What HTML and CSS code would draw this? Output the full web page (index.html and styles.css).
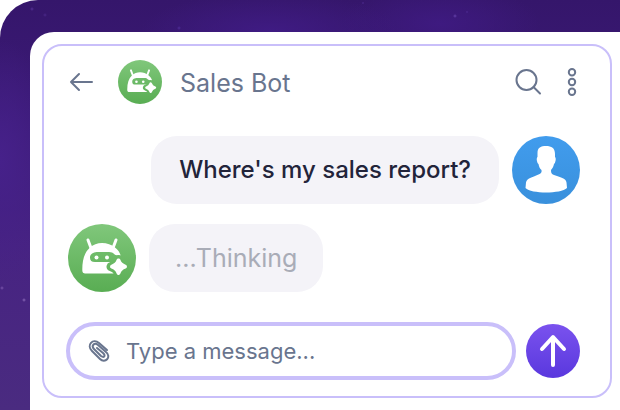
FILE: index.html
```
<!DOCTYPE html>
<html lang="en">
<head>
    <meta charset="utf-8">
    <title>Sales Bot</title>
    <link rel="stylesheet" href="styles.css">
</head>

<body>
    <!-- bot picture, used in the header and in the messages -->
    <svg class="defs" aria-hidden="true">
        <defs>
            <linearGradient id="green" x1="0" y1="0" x2="0" y2="1">
                <stop offset="0" stop-color="#80c77b"/>
                <stop offset="1" stop-color="#59ad53"/>
            </linearGradient>
            <mask id="face" maskUnits="userSpaceOnUse" x="0" y="0" width="68" height="68">
                <rect width="68" height="68" fill="#fff"/>
                <path d="M22 33.500C22 29.500 26 28 30 28H41C46 28 46 31.500 50 31.500H55V38H27C23.500 38 22 36.500 22 33.500Z" fill="#000"/>
                <path d="M50.500 35.500Q52 41 58 42.700Q52 44.400 50.500 50Q49 44.400 43 42.700Q49 41 50.500 35.500Z" fill="#000" stroke="#000" stroke-width="9" stroke-linejoin="round"/>
            </mask>
            <symbol id="bot" viewBox="0 0 68 68">
                <circle cx="34" cy="34" r="34" fill="url(#green)"/>
                <g mask="url(#face)" fill="#fff">
                    <path d="M18 49.500C15 49.500 14.300 48.500 14.300 45.500C14.300 36 16.500 28.500 21.500 24C25 20.500 29.500 19 34 19C39 19 43.500 20.500 47 23.500C50 26 51.500 28 52.500 31V49.500Z"/>
                    <path d="M20 16L23 24M48 16L45 24" stroke="#fff" stroke-width="3" stroke-linecap="round"/>
                </g>
                <circle cx="28.500" cy="33.500" r="2" fill="#fff"/>
                <circle cx="39" cy="33.500" r="2" fill="#fff"/>
                <path d="M50.500 36.500Q52 41 57 42.700Q52 44.400 50.500 49Q49 44.400 44 42.700Q49 41 50.500 36.500Z" fill="#fff" stroke="#fff" stroke-width="4" stroke-linejoin="round"/>
            </symbol>
        </defs>
    </svg>

    <div class="stage">
        <div class="panel">
            <main class="chat">
                <header class="chat_head">
                    <button type="button" class="icon_btn" aria-label="Back">
                        <svg width="28" height="28" viewBox="0 0 28 28"><path d="M24 14H3M11 6L3 14L11 22"/></svg>
                    </button>
                    <svg class="head_avatar" role="img" aria-label="Sales Bot"><use href="#bot"/></svg>
                    <h1>Sales Bot</h1>
                    <button type="button" class="icon_btn" aria-label="Search">
                        <svg width="28" height="28" viewBox="0 0 28 28"><circle cx="12.500" cy="12" r="10"/><path d="M19.500 19L26 25.500"/></svg>
                    </button>
                    <button type="button" class="icon_btn menu_btn" aria-label="Menu">
                        <svg width="12" height="30" viewBox="0 0 12 30"><circle cx="6" cy="5.300" r="3.200"/><circle cx="6" cy="15" r="3.200"/><circle cx="6" cy="24.700" r="3.200"/></svg>
                    </button>
                </header>

                <div class="messages">
                    <div class="msg msg_me">
                        <p class="bubble">Where's my sales report?</p>
                        <svg class="avatar" viewBox="0 0 68 68" role="img" aria-label="You">
                            <defs>
                                <linearGradient id="blue" x1="0" y1="0" x2="0" y2="1">
                                    <stop offset="0" stop-color="#419ced"/>
                                    <stop offset="1" stop-color="#3990dc"/>
                                </linearGradient>
                            </defs>
                            <circle cx="34" cy="34" r="34" fill="url(#blue)"/>
                            <path d="M25.500 17C25.500 11.500 29 10 34 10C39.500 10 43 12 43 18V21C44.500 22 43.500 27 42 28C41.500 31 40 33 39 34C39 37 39.500 38 42 39C48 41.500 54 42 54.500 46.500L55 52C49 58 19 58 13.500 52L14 46.500C15 42 20 41.500 26.500 38.500C29 37.500 30 36.500 29.500 34C28 33 27 31 26.500 28C25 27 24 22 25.500 21Z" fill="#fff"/>
                        </svg>
                    </div>
                    <div class="msg">
                        <svg class="avatar" role="img" aria-label="Sales Bot"><use href="#bot"/></svg>
                        <p class="bubble thinking">...Thinking</p>
                    </div>
                </div>

                <form class="composer">
                    <div class="field">
                        <button type="button" class="icon_btn" aria-label="Attach a file">
                            <svg width="24" height="24" viewBox="0 0 24 24"><path d="M20 11L12 4C6 -1 -1 6 5 12L13 20C18 25 25 18 19 13L11 6C7 3 4 7 7 10L14 17C17 19 19 17 16 14L10 9"/></svg>
                        </button>
                        <input type="text" aria-label="Message" placeholder="Type a message...">
                    </div>
                    <button type="submit" class="send" aria-label="Send">
                        <svg width="54" height="54" viewBox="0 0 54 54"><path d="M27 41V14M16 25L27 13L38 25"/></svg>
                    </button>
                </form>
            </main>
        </div>
    </div>
</body>

</html>
```
FILE: styles.css
```
* {
    box-sizing: border-box;
    margin: 0;
    padding: 0;
}
body {
    background: #fff;
    color: #22243a;
    font-family: Inter, "Liberation Sans", sans-serif;
    font-size: 25px;
    line-height: 32px;
}
button {
    border: 0;
    background: none;
    cursor: pointer;
}
svg {
    display: block;
}
.defs {
    position: absolute;
    width: 0;
    height: 0;
}
.stage {
    display: flex;
    min-height: 100vh;
    padding: 32px 0 0 30px;
    border-top-left-radius: 38px;
    /* a few stars over the night sky */
    background:
        radial-gradient(circle at 32px 9px, #553097, transparent 2px),
        radial-gradient(circle at 45px 15px, #4a2888, transparent 2px),
        radial-gradient(circle at 179px 28px, #4f2c98, transparent 2px),
        radial-gradient(circle at 363px 3px, #5a36a4, transparent 1px),
        radial-gradient(circle at 455px 16px, #6541aa, transparent 2px),
        radial-gradient(circle at 467px 12px, #5a36a4, transparent 1px),
        radial-gradient(circle at 2px 288px, #7a55ac, transparent 2px),
        radial-gradient(circle at 24px 300px, #8a68b8, transparent 2px),
        radial-gradient(ellipse 130px 40px at 270px 32px, #3f1b83, transparent),
        radial-gradient(ellipse 100px 40px at 440px 24px, #3e1a80, transparent),
        radial-gradient(ellipse 60px 120px at 0 160px, #46218a, transparent),
        linear-gradient(#35166b, #3c1a78 30%, #472382 60%, #4a2b80);
}
.panel {
    flex: 1;
    display: flex;
    padding: 12px 8px 12px 12px;
    border-top-left-radius: 24px;
    background: #fff;
}
.chat {
    flex: 1;
    padding: 14px 30px 16px 24px;
    border: 2px solid #c9bffa;
    border-radius: 20px;
}
.chat_head {
    display: flex;
    align-items: center;
    margin-bottom: 32px;
}
.chat_head h1 {
    flex: 1;
    padding-top: 2px;
    color: #69758e;
    font-size: 25px;
    font-weight: 400;
}
.head_avatar {
    width: 44px;
    height: 44px;
    margin: 0 18px 0 22px;
}
.icon_btn svg {
    fill: none;
    stroke: #69758e;
    stroke-width: 2;
    stroke-linecap: round;
    stroke-linejoin: round;
}
.menu_btn {
    margin: 0 2px 0 24px;
}
.messages {
    display: flex;
    flex-direction: column;
    gap: 20px;
    margin-bottom: 30px;
}
.msg {
    display: flex;
    align-items: center;
    gap: 13px;
}
.msg_me {
    justify-content: flex-end;
}
.avatar {
    flex: none;
    width: 68px;
    height: 68px;
}
.bubble {
    padding: 18px 26px;
    border-radius: 26px;
    background: #f4f3f8;
}
.msg_me .bubble {
    padding: 18px 28px;
    font-size: 24px;
    font-weight: 500;
}
.thinking {
    color: #a9acb7;
}
.composer {
    display: flex;
    align-items: center;
    gap: 10px;
    margin-left: -2px;
}
.field {
    flex: 1;
    display: flex;
    align-items: center;
    gap: 15px;
    height: 58px;
    padding: 0 20px 0 17px;
    border: 4px solid #c9bffa;
    border-radius: 29px;
}
.field input {
    flex: 1;
    min-width: 0;
    border: 0;
    outline: 0;
    background: none;
    color: #22243a;
    font-family: inherit;
    font-size: 22px;
}
.field input::placeholder {
    color: #69758e;
    opacity: 1;
}
.send {
    width: 54px;
    height: 54px;
    border-radius: 50%;
    background: linear-gradient(#7a52ee, #5a38de);
}
.send path {
    fill: none;
    stroke: #fff;
    stroke-width: 4;
    stroke-linecap: round;
    stroke-linejoin: round;
}
```
